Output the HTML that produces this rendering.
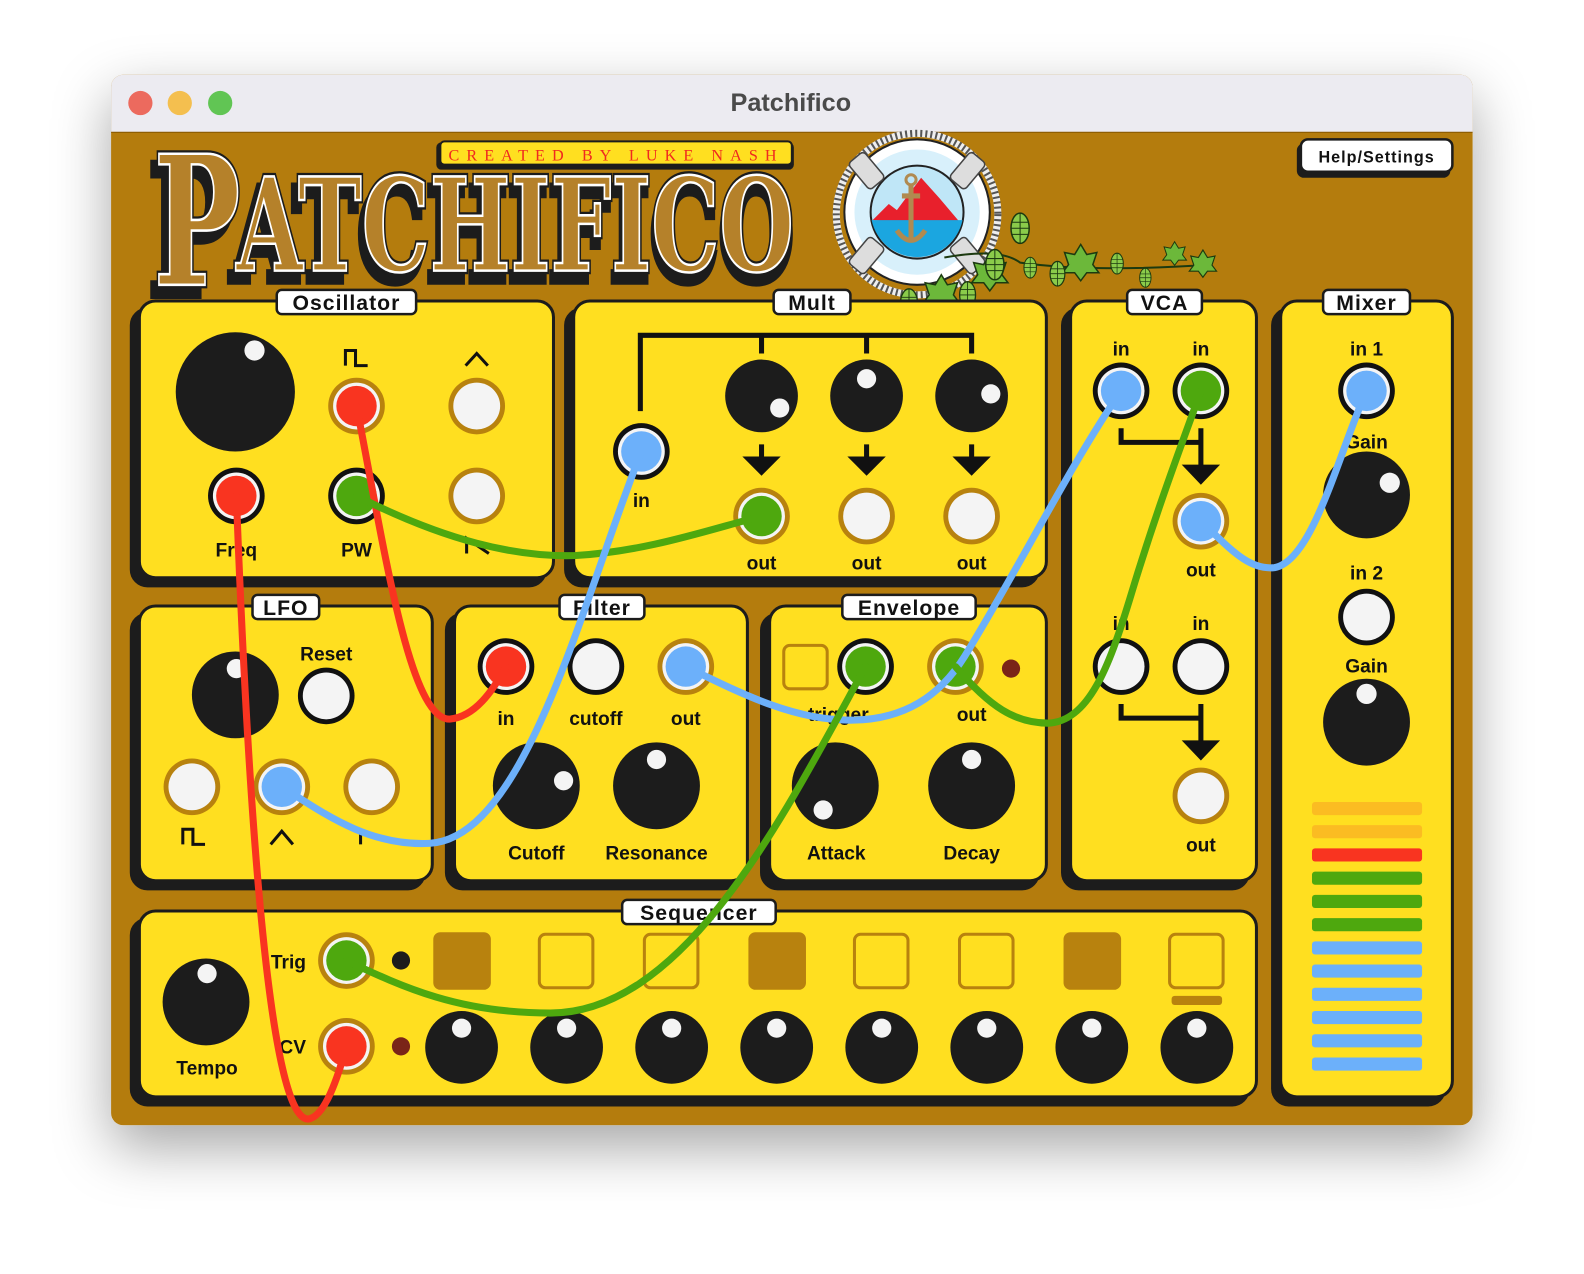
<!DOCTYPE html>
<html><head><meta charset="utf-8">
<style>
html,body{margin:0;padding:0;background:#fff;width:1584px;height:1274px;overflow:hidden}
svg{display:block}
text{font-family:"Liberation Sans",sans-serif;font-weight:bold;fill:#111}
</style></head><body>
<svg width="1584" height="1274" viewBox="0 0 1584 1274" xmlns="http://www.w3.org/2000/svg">
<defs>
<filter id="ws" x="-20%" y="-20%" width="140%" height="150%"><feDropShadow dx="0" dy="22" stdDeviation="28" flood-color="#000" flood-opacity="0.35"/></filter>
<symbol id="jb" viewBox="-30 -30 60 60" overflow="visible"><circle r="29" fill="#111"/><circle r="24" fill="#f4f4f4"/></symbol>
<symbol id="jg" viewBox="-30 -30 60 60" overflow="visible"><circle r="29" fill="#b8820e"/><circle r="24" fill="#f4f4f4"/></symbol>
<symbol id="leaf" viewBox="-20 -20 40 40" overflow="visible"><path d="M0,-18 L6,-8 L16,-10 L12,2 L18,10 L6,10 L0,18 L-6,10 L-18,10 L-12,2 L-16,-10 L-6,-8 Z" fill="#6cb83a" stroke="#1c3a10" stroke-width="1.5"/></symbol>
<symbol id="cone" viewBox="-10 -16 20 32" overflow="visible"><ellipse rx="9" ry="15" fill="#8acb4a" stroke="#1c3a10" stroke-width="1.5"/><path d="M-8,-6 H8 M-9,0 H9 M-8,6 H8 M0,-15 V15" stroke="#1c3a10" stroke-width="1"/></symbol>
</defs>
<g transform="scale(1.01)">
<!-- window -->
<rect x="110" y="74" width="1348" height="1040" rx="12" fill="#b47b0e" filter="url(#ws)"/>
<path d="M110,131 V86 a12,12 0 0 1 12,-12 H1446 a12,12 0 0 1 12,12 V131 Z" fill="#ecebf1"/>
<line x1="110" y1="131" x2="1458" y2="131" stroke="#8a5a00" stroke-width="1"/>
<circle cx="139" cy="102" r="12" fill="#ec6a5e"/><circle cx="178" cy="102" r="12" fill="#f4bf4f"/><circle cx="218" cy="102" r="12" fill="#61c554"/>
<text x="783" y="110" text-anchor="middle" style="font-size:25px;fill:#4a4a4a">Patchifico</text>

<!-- logo -->
<g style="font-family:'DejaVu Serif','Liberation Serif',serif;font-weight:bold">
<text x="146" y="292" style="font-family:'DejaVu Serif','Liberation Serif',serif;font-size:178px;fill:#1c1c1c;stroke:#1c1c1c;stroke-width:8" textLength="86" lengthAdjust="spacingAndGlyphs">P</text>
<text x="228" y="278" style="font-family:'DejaVu Serif','Liberation Serif',serif;font-size:128px;fill:#1c1c1c;stroke:#1c1c1c;stroke-width:8" textLength="558" lengthAdjust="spacingAndGlyphs">ATCHIFICO</text>
<text x="152" y="282" style="font-family:'DejaVu Serif','Liberation Serif',serif;font-size:178px;fill:#b5812a;stroke:#1c1c1c;stroke-width:7;paint-order:stroke" textLength="86" lengthAdjust="spacingAndGlyphs">P</text>
<text x="234" y="268" style="font-family:'DejaVu Serif','Liberation Serif',serif;font-size:128px;fill:#b5812a;stroke:#1c1c1c;stroke-width:7;paint-order:stroke" textLength="552" lengthAdjust="spacingAndGlyphs">ATCHIFICO</text>
<text x="152" y="282" style="font-family:'DejaVu Serif','Liberation Serif',serif;font-size:178px;fill:#b5812a;stroke:#fff;stroke-width:2.5" textLength="86" lengthAdjust="spacingAndGlyphs">P</text>
<text x="234" y="268" style="font-family:'DejaVu Serif','Liberation Serif',serif;font-size:128px;fill:#b5812a;stroke:#fff;stroke-width:2.5" textLength="552" lengthAdjust="spacingAndGlyphs">ATCHIFICO</text>
</g>
<rect x="432" y="141" width="354" height="27" rx="5" fill="#1c1c1c"/>
<rect x="436" y="140" width="348" height="23" rx="4" fill="#ffdf20" stroke="#1c1c1c" stroke-width="2"/>
<text x="610" y="159" text-anchor="middle" style="font-family:'Liberation Serif',serif;font-size:16px;font-weight:normal;fill:#f0291f;letter-spacing:7px">CREATED BY LUKE NASH</text>

<!-- lifebuoy -->
<g>
<ellipse cx="908" cy="212" rx="80" ry="80" fill="none" stroke="#eee" stroke-width="7"/>
<ellipse cx="908" cy="212" rx="80" ry="80" fill="none" stroke="#555" stroke-width="7" stroke-dasharray="2 3"/>
<circle cx="908" cy="210" r="72" fill="#fff" stroke="#222" stroke-width="2"/>
<circle cx="908" cy="210" r="62" fill="#d8f0fb"/>
<circle cx="908" cy="210" r="46" fill="#bfe6f7" stroke="#222" stroke-width="2"/>
<path d="M864,218 L880,202 L888,208 L912,176 L930,196 L952,222 Z" fill="#e8202c"/>
<path d="M863,218 H953 A46,46 0 0 1 863,218 Z" fill="#1ba6e0"/>
<path d="M902,182 V240 M888,228 Q902,248 916,228 M893,194 H911" stroke="#b08a50" stroke-width="5" fill="none"/>
<circle cx="902" cy="178" r="5" fill="none" stroke="#b08a50" stroke-width="3"/>
<g fill="#ddd" stroke="#444" stroke-width="1.5">
<rect x="848" y="152" width="20" height="34" rx="4" transform="rotate(-40 858 169)"/>
<rect x="948" y="152" width="20" height="34" rx="4" transform="rotate(40 958 169)"/>
<rect x="848" y="236" width="20" height="34" rx="4" transform="rotate(40 858 253)"/>
<rect x="948" y="236" width="20" height="34" rx="4" transform="rotate(-40 958 253)"/>
</g>
</g>
<!-- hops -->
<g>
<path d="M935,255 Q990,245 1010,260 Q1080,270 1200,262" stroke="#1c3a10" stroke-width="2" fill="none"/>
<use href="#leaf" x="960" y="250" width="40" height="40"/>
<use href="#leaf" x="912" y="270" width="40" height="40"/>
<use href="#leaf" x="1050" y="240" width="40" height="40"/>
<use href="#leaf" x="1150" y="238" width="26" height="26"/>
<use href="#leaf" x="1176" y="246" width="30" height="30"/>
<use href="#cone" x="1000" y="210" width="20" height="32"/>
<use href="#cone" x="975" y="246" width="20" height="32"/>
<use href="#cone" x="1006" y="254" width="28" height="22"/>
<use href="#cone" x="1092" y="250" width="28" height="22"/>
<use href="#cone" x="1120" y="265" width="28" height="20"/>
<use href="#cone" x="1038" y="258" width="18" height="26"/>
<use href="#cone" x="890" y="285" width="20" height="30"/>
<use href="#cone" x="948" y="278" width="20" height="28"/>
</g>

<!-- help -->
<rect x="1284" y="142" width="152" height="34" rx="7" fill="#1c1c1c"/>
<rect x="1288" y="138" width="150" height="32" rx="7" fill="#fff" stroke="#1c1c1c" stroke-width="2.5"/>
<text x="1363" y="161" text-anchor="middle" style="font-size:16px;letter-spacing:1px">Help/Settings</text>

<!-- panels -->
<g stroke="#1c1c1c" stroke-width="3">
<rect x="130" y="306" width="410" height="274" rx="16" fill="#1c1c1c"/><rect x="138" y="298" width="410" height="274" rx="16" fill="#ffdf20"/>
<rect x="560" y="306" width="468" height="274" rx="16" fill="#1c1c1c"/><rect x="568" y="298" width="468" height="274" rx="16" fill="#ffdf20"/>
<rect x="1052" y="306" width="184" height="574" rx="16" fill="#1c1c1c"/><rect x="1060" y="298" width="184" height="574" rx="16" fill="#ffdf20"/>
<rect x="1260" y="306" width="170" height="788" rx="16" fill="#1c1c1c"/><rect x="1268" y="298" width="170" height="788" rx="16" fill="#ffdf20"/>
<rect x="130" y="608" width="290" height="272" rx="16" fill="#1c1c1c"/><rect x="138" y="600" width="290" height="272" rx="16" fill="#ffdf20"/>
<rect x="442" y="608" width="290" height="272" rx="16" fill="#1c1c1c"/><rect x="450" y="600" width="290" height="272" rx="16" fill="#ffdf20"/>
<rect x="754" y="608" width="274" height="272" rx="16" fill="#1c1c1c"/><rect x="762" y="600" width="274" height="272" rx="16" fill="#ffdf20"/>
<rect x="130" y="910" width="1106" height="184" rx="16" fill="#1c1c1c"/><rect x="138" y="902" width="1106" height="184" rx="16" fill="#ffdf20"/>
</g>
<!-- tabs -->
<g fill="#fff" stroke="#1c1c1c" stroke-width="2.5">
<rect x="274" y="287" width="138" height="24" rx="5"/>
<rect x="766" y="287" width="76" height="24" rx="5"/>
<rect x="1116" y="287" width="74" height="24" rx="5"/>
<rect x="1310" y="287" width="86" height="24" rx="5"/>
<rect x="250" y="589" width="66" height="24" rx="5"/>
<rect x="554" y="589" width="84" height="24" rx="5"/>
<rect x="834" y="589" width="132" height="24" rx="5"/>
<rect x="616" y="891" width="152" height="24" rx="5"/>
</g>
<g text-anchor="middle">
<text x="343" y="307" style="font-size:21px;letter-spacing:1px">Oscillator</text>
<text x="804" y="307" style="font-size:21px;letter-spacing:1px">Mult</text>
<text x="1153" y="307" style="font-size:21px;letter-spacing:1px">VCA</text>
<text x="1353" y="307" style="font-size:21px;letter-spacing:1px">Mixer</text>
<text x="283" y="609" style="font-size:21px;letter-spacing:1px">LFO</text>
<text x="596" y="609" style="font-size:21px;letter-spacing:1px">Filter</text>
<text x="900" y="609" style="font-size:21px;letter-spacing:1px">Envelope</text>
<text x="692" y="911" style="font-size:21px;letter-spacing:1px">Sequencer</text>
</g>

<!-- Oscillator -->
<circle cx="233" cy="388" r="59" fill="#1c1c1c"/><circle cx="252" cy="347" r="10" fill="#f4f4f4"/>
<use href="#jb" x="205" y="462" width="58" height="58"/><circle cx="234" cy="491" r="20" fill="#f93420"/>
<use href="#jb" x="324" y="462" width="58" height="58"/><circle cx="353" cy="491" r="20" fill="#4ea80e"/>
<use href="#jg" x="324" y="373" width="58" height="58"/><circle cx="353" cy="402" r="20" fill="#f93420"/>
<use href="#jg" x="443" y="373" width="58" height="58"/>
<use href="#jg" x="443" y="462" width="58" height="58"/>
<g stroke="#111" stroke-width="3" fill="none">
<path d="M342,362 V347 H352 V362 H364"/>
<path d="M461,362 L472,350 L483,362"/>
<path d="M462,548 V533 L484,548"/>
</g>
<g style="font-size:19px" text-anchor="middle">
<text x="234" y="551" style="font-size:19px">Freq</text><text x="353" y="551" style="font-size:19px">PW</text>
</g>

<!-- Mult -->
<g stroke="#111" stroke-width="5" fill="none">
<path d="M634,407 V332 H962 V350 M754,332 V350 M858,332 V350"/>
<path d="M754,440 V455 M858,440 V455 M962,440 V455"/>
</g>
<g fill="#111"><path d="M735,452 h38 l-19,19 z"/><path d="M839,452 h38 l-19,19 z"/><path d="M943,452 h38 l-19,19 z"/></g>
<circle cx="754" cy="392" r="36" fill="#1c1c1c"/><circle cx="772" cy="404" r="9.5" fill="#f4f4f4"/>
<circle cx="858" cy="392" r="36" fill="#1c1c1c"/><circle cx="858" cy="375" r="9.5" fill="#f4f4f4"/>
<circle cx="962" cy="392" r="36" fill="#1c1c1c"/><circle cx="981" cy="390" r="9.5" fill="#f4f4f4"/>
<use href="#jb" x="606" y="418" width="58" height="58"/><circle cx="635" cy="447" r="20" fill="#6cb0fa"/>
<use href="#jg" x="725" y="482" width="58" height="58"/><circle cx="754" cy="511" r="20" fill="#4ea80e"/>
<use href="#jg" x="829" y="482" width="58" height="58"/>
<use href="#jg" x="933" y="482" width="58" height="58"/>
<g text-anchor="middle">
<text x="635" y="502" style="font-size:19px">in</text><text x="754" y="564" style="font-size:19px">out</text><text x="858" y="564" style="font-size:19px">out</text><text x="962" y="564" style="font-size:19px">out</text>
</g>

<!-- VCA -->
<g stroke="#111" stroke-width="5" fill="none">
<path d="M1110,424 V438 H1189 M1189,424 V462"/>
<path d="M1110,697 V711 H1189 M1189,697 V735"/>
</g>
<g fill="#111"><path d="M1170,460 h38 l-19,20 z"/><path d="M1170,733 h38 l-19,20 z"/></g>
<use href="#jb" x="1081" y="358" width="58" height="58"/><circle cx="1110" cy="387" r="20" fill="#6cb0fa"/>
<use href="#jb" x="1160" y="358" width="58" height="58"/><circle cx="1189" cy="387" r="20" fill="#4ea80e"/>
<use href="#jg" x="1160" y="487" width="58" height="58"/><circle cx="1189" cy="516" r="20" fill="#6cb0fa"/>
<use href="#jb" x="1081" y="631" width="58" height="58"/>
<use href="#jb" x="1160" y="631" width="58" height="58"/>
<use href="#jg" x="1160" y="759" width="58" height="58"/>
<g text-anchor="middle">
<text x="1110" y="352" style="font-size:19px">in</text><text x="1189" y="352" style="font-size:19px">in</text><text x="1189" y="571" style="font-size:19px">out</text>
<text x="1110" y="624" style="font-size:19px">in</text><text x="1189" y="624" style="font-size:19px">in</text><text x="1189" y="843" style="font-size:19px">out</text>
</g>

<!-- Mixer -->
<use href="#jb" x="1324" y="358" width="58" height="58"/><circle cx="1353" cy="387" r="20" fill="#6cb0fa"/>
<circle cx="1353" cy="490" r="43" fill="#1c1c1c"/><circle cx="1376" cy="478" r="10" fill="#f4f4f4"/>
<use href="#jb" x="1324" y="582" width="58" height="58"/>
<circle cx="1353" cy="715" r="43" fill="#1c1c1c"/><circle cx="1353" cy="687" r="10" fill="#f4f4f4"/>
<g text-anchor="middle">
<text x="1353" y="352" style="font-size:19px">in 1</text><text x="1353" y="444" style="font-size:19px">Gain</text><text x="1353" y="574" style="font-size:19px">in 2</text><text x="1353" y="666" style="font-size:19px">Gain</text>
</g>
<g>
<rect x="1299" y="794" width="109" height="13" rx="3" fill="#fbbc22"/>
<rect x="1299" y="817" width="109" height="13" rx="3" fill="#fbbc22"/>
<rect x="1299" y="840" width="109" height="13" rx="3" fill="#f93420"/>
<rect x="1299" y="863" width="109" height="13" rx="3" fill="#4ea80e"/>
<rect x="1299" y="886" width="109" height="13" rx="3" fill="#4ea80e"/>
<rect x="1299" y="909" width="109" height="13" rx="3" fill="#4ea80e"/>
<rect x="1299" y="932" width="109" height="13" rx="3" fill="#6cb0fa"/>
<rect x="1299" y="955" width="109" height="13" rx="3" fill="#6cb0fa"/>
<rect x="1299" y="978" width="109" height="13" rx="3" fill="#6cb0fa"/>
<rect x="1299" y="1001" width="109" height="13" rx="3" fill="#6cb0fa"/>
<rect x="1299" y="1024" width="109" height="13" rx="3" fill="#6cb0fa"/>
<rect x="1299" y="1047" width="109" height="13" rx="3" fill="#6cb0fa"/>
</g>

<!-- LFO -->
<circle cx="233" cy="688" r="43" fill="#1c1c1c"/><circle cx="234" cy="662" r="9.5" fill="#f4f4f4"/>
<use href="#jb" x="294" y="660" width="58" height="58"/>
<use href="#jg" x="161" y="750" width="58" height="58"/>
<use href="#jg" x="250" y="750" width="58" height="58"/><circle cx="279" cy="779" r="20" fill="#6cb0fa"/>
<use href="#jg" x="339" y="750" width="58" height="58"/>
<text x="323" y="654" text-anchor="middle" style="font-size:19px">Reset</text>
<g stroke="#111" stroke-width="3" fill="none">
<path d="M181,836 V821 H191 V836 H203"/>
<path d="M268,836 L279,823 L290,836"/>
<path d="M357,836 V823"/>
</g>

<!-- Filter -->
<use href="#jb" x="472" y="631" width="58" height="58"/><circle cx="501" cy="660" r="20" fill="#f93420"/>
<use href="#jb" x="561" y="631" width="58" height="58"/>
<use href="#jg" x="650" y="631" width="58" height="58"/><circle cx="679" cy="660" r="20" fill="#6cb0fa"/>
<circle cx="531" cy="778" r="43" fill="#1c1c1c"/><circle cx="558" cy="773" r="9.5" fill="#f4f4f4"/>
<circle cx="650" cy="778" r="43" fill="#1c1c1c"/><circle cx="650" cy="752" r="9.5" fill="#f4f4f4"/>
<g text-anchor="middle">
<text x="501" y="718" style="font-size:19px">in</text><text x="590" y="718" style="font-size:19px">cutoff</text><text x="679" y="718" style="font-size:19px">out</text>
<text x="531" y="851" style="font-size:19px">Cutoff</text><text x="650" y="851" style="font-size:19px">Resonance</text>
</g>

<!-- Envelope -->
<rect x="776" y="639" width="43" height="43" rx="6" fill="none" stroke="#b8820e" stroke-width="3"/>
<use href="#jb" x="828" y="631" width="58" height="58"/><circle cx="857" cy="660" r="20" fill="#4ea80e"/>
<use href="#jg" x="917" y="631" width="58" height="58"/><circle cx="946" cy="660" r="20" fill="#4ea80e"/>
<circle cx="1001" cy="662" r="9" fill="#7a2418"/>
<circle cx="827" cy="778" r="43" fill="#1c1c1c"/><circle cx="815" cy="802" r="9.5" fill="#f4f4f4"/>
<circle cx="962" cy="778" r="43" fill="#1c1c1c"/><circle cx="962" cy="752" r="9.5" fill="#f4f4f4"/>
<g text-anchor="middle">
<text x="830" y="714" style="font-size:19px">trigger</text><text x="962" y="714" style="font-size:19px">out</text>
<text x="828" y="851" style="font-size:19px">Attack</text><text x="962" y="851" style="font-size:19px">Decay</text>
</g>

<!-- Sequencer -->
<circle cx="204" cy="992" r="43" fill="#1c1c1c"/><circle cx="205" cy="964" r="9.5" fill="#f4f4f4"/>
<text x="205" y="1064" text-anchor="middle" style="font-size:19px">Tempo</text>
<text x="303" y="959" text-anchor="end" style="font-size:19px">Trig</text>
<text x="303" y="1043" text-anchor="end" style="font-size:19px">CV</text>
<use href="#jg" x="314" y="922" width="58" height="58"/><circle cx="343" cy="951" r="20" fill="#4ea80e"/>
<use href="#jg" x="314" y="1007" width="58" height="58"/><circle cx="343" cy="1036" r="20" fill="#f93420"/>
<circle cx="397" cy="951" r="9" fill="#1c1c1c"/><circle cx="397" cy="1036" r="9" fill="#7a2418"/>
<g>
<rect x="429" y="923" width="57" height="57" rx="7" fill="#b8820e"/>
<rect x="534" y="925" width="53" height="53" rx="6" fill="none" stroke="#b8820e" stroke-width="3"/>
<rect x="638" y="925" width="53" height="53" rx="6" fill="none" stroke="#b8820e" stroke-width="3"/>
<rect x="741" y="923" width="57" height="57" rx="7" fill="#b8820e"/>
<rect x="846" y="925" width="53" height="53" rx="6" fill="none" stroke="#b8820e" stroke-width="3"/>
<rect x="950" y="925" width="53" height="53" rx="6" fill="none" stroke="#b8820e" stroke-width="3"/>
<rect x="1053" y="923" width="57" height="57" rx="7" fill="#b8820e"/>
<rect x="1158" y="925" width="53" height="53" rx="6" fill="none" stroke="#b8820e" stroke-width="3"/>
<rect x="1160" y="986" width="50" height="9" rx="3" fill="#b8820e"/>
</g>
<g fill="#1c1c1c">
<circle cx="457" cy="1037" r="36"/><circle cx="561" cy="1037" r="36"/><circle cx="665" cy="1037" r="36"/><circle cx="769" cy="1037" r="36"/>
<circle cx="873" cy="1037" r="36"/><circle cx="977" cy="1037" r="36"/><circle cx="1081" cy="1037" r="36"/><circle cx="1185" cy="1037" r="36"/>
</g>
<g fill="#f4f4f4">
<circle cx="457" cy="1018" r="9.5"/><circle cx="561" cy="1018" r="9.5"/><circle cx="665" cy="1018" r="9.5"/><circle cx="769" cy="1018" r="9.5"/>
<circle cx="873" cy="1018" r="9.5"/><circle cx="977" cy="1018" r="9.5"/><circle cx="1081" cy="1018" r="9.5"/><circle cx="1185" cy="1018" r="9.5"/>
</g>

<!-- cables -->
<g fill="none" stroke-width="7" stroke-linecap="round">
<path d="M234,491 C248,860 270,1108 305,1108 C322,1106 335,1065 343,1036" stroke="#f93420"/>
<path d="M353,402 C380,540 405,712 445,712 C470,710 488,684 501,660" stroke="#f93420"/>
<path d="M353,491 C440,535 510,552 570,550 C640,546 700,525 754,511" stroke="#4ea80e"/>
<path d="M635,447 C575,600 520,830 425,835 C365,838 320,805 279,779" stroke="#6cb0fa"/>
<path d="M679,660 C740,690 790,714 845,713 C895,712 930,690 955,650 C1010,560 1060,460 1110,387" stroke="#6cb0fa"/>
<path d="M946,660 C980,700 1005,716 1038,716 C1078,714 1098,660 1118,595 C1145,505 1170,440 1189,387" stroke="#4ea80e"/>
<path d="M857,660 C780,800 680,1003 545,1003 C455,1003 400,978 343,951" stroke="#4ea80e"/>
<path d="M1189,516 C1215,540 1235,565 1262,562 C1300,555 1325,450 1353,387" stroke="#6cb0fa"/>
</g>
</g>
</svg>
</body></html>
